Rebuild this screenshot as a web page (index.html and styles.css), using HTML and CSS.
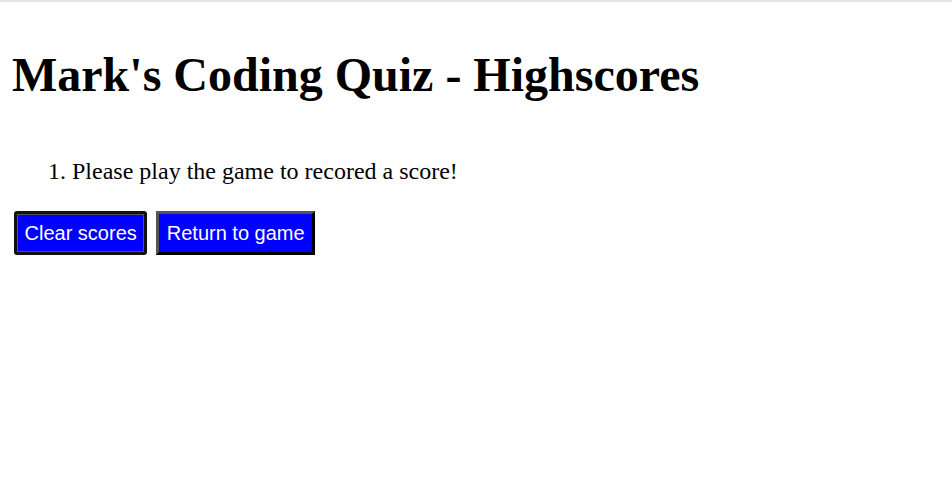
FILE: index.html
```html
<!DOCTYPE html>
<html>
<head>
<meta charset="utf-8">
<title>Highscores</title>
<link rel="stylesheet" href="styles.css">
</head>
<body>
<div class="topline"></div>
<main class="page">
  <h1 class="title">Mark's Coding Quiz - Highscores</h1>
  <ol class="scores">
    <li>Please play the game to recored a score!</li>
  </ol>
  <div class="actions">
    <button class="btn btn-focus">Clear scores</button>
    <button class="btn">Return to game</button>
  </div>
</main>
</body>
</html>
```
FILE: styles.css
```css
html, body {
  margin: 0;
  padding: 0;
  background: #fff;
}
body {
  font-family: "Liberation Serif", "Times New Roman", serif;
  color: #000;
}
.topline {
  height: 2px;
  background: #e3e3e3;
}
.page {
  padding: 0 12px;
}
.title {
  font-size: 48px;
  font-weight: bold;
  margin: 45px 0 0 0;
  line-height: 55px;
}
.scores {
  font-size: 24px;
  margin: 55px 0 0 0;
  padding-left: 60px;
  line-height: 28px;
}
.actions {
  display: flex;
  gap: 9px;
  margin-top: 26px;
  padding-left: 2px;
}
.btn {
  font-family: "Liberation Sans", Arial, sans-serif;
  font-size: 20px;
  color: #fff;
  background: #0000ff;
  border: 3px solid;
  border-color: #555 #000 #000 #555;
  padding: 7.5px 7.5px;
  height: 44px;
  line-height: 23px;
  margin: 0;
}
.btn-focus {
  border-color: #111;
  border-radius: 3px;
  box-shadow: inset 0 0 0 1px #555;
}
```
